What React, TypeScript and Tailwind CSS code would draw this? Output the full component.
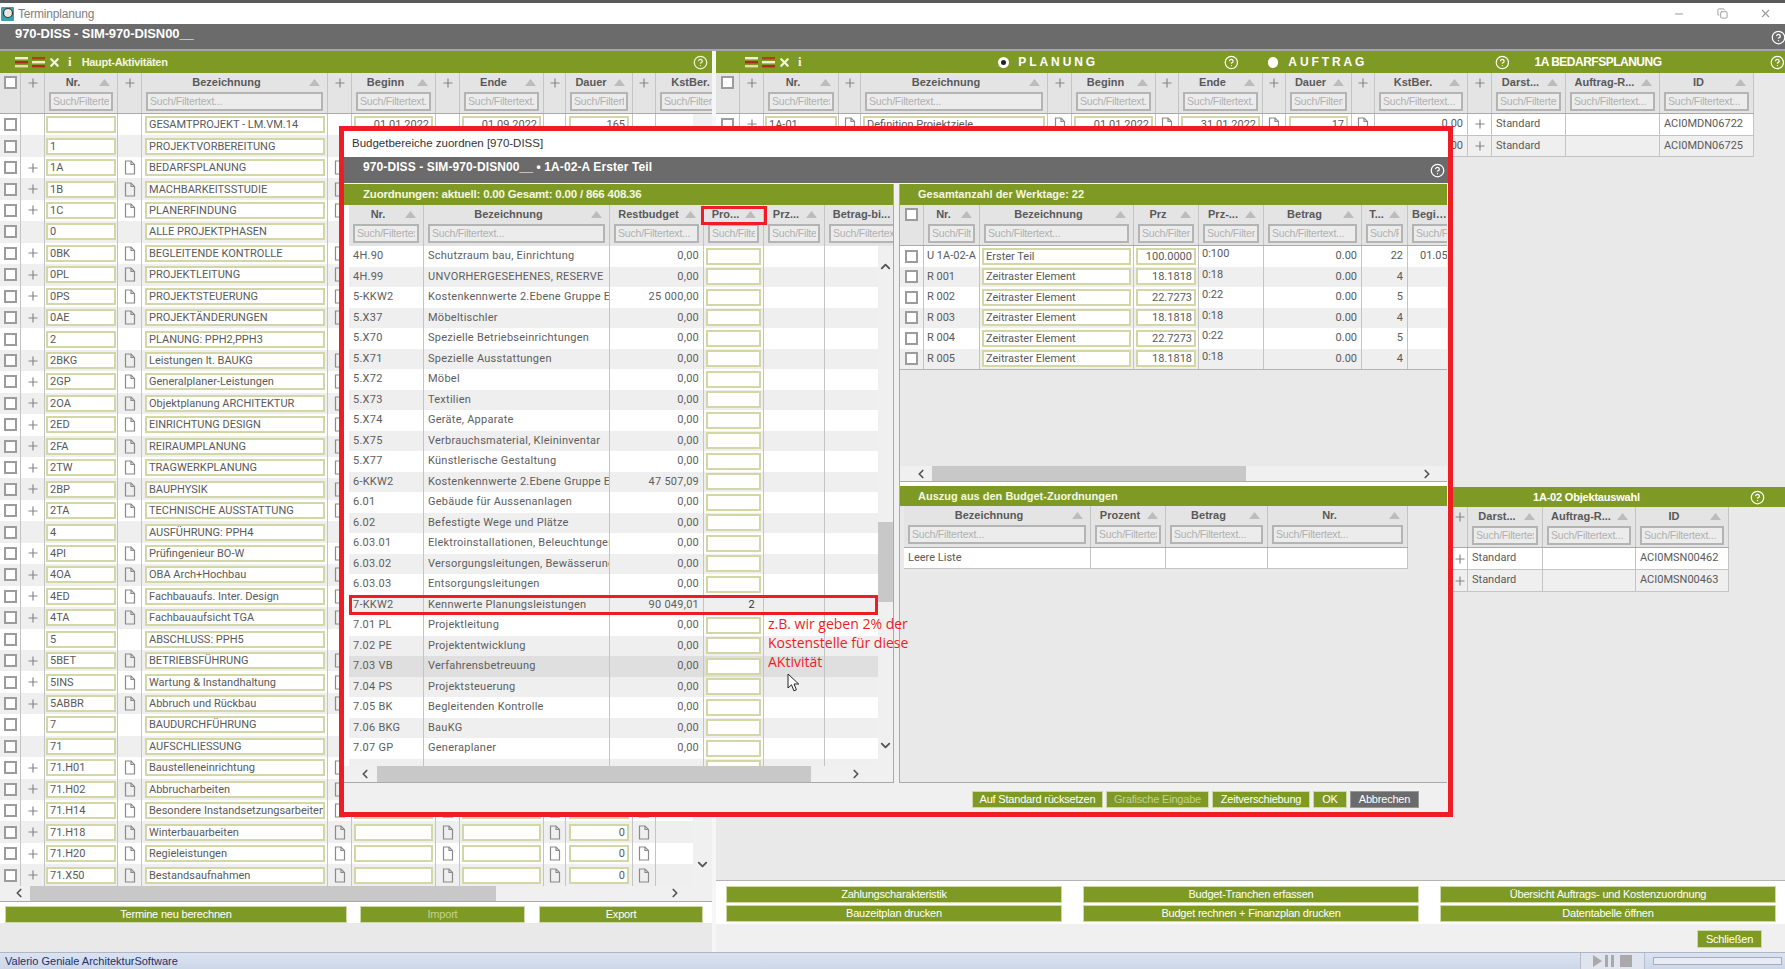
import { ChevronDown, ChevronLeft, ChevronRight, ChevronUp, CircleHelp, Copy, Minus, Plus, X } from "lucide-react";

const LEFT_COLS = "grid-cols-[21px_24px_73px_24px_186px_24px_84px_24px_84px_22px_67px_23px_86px]";
const RIGHT_COLS = "grid-cols-[24px_24px_75px_22px_187px_24px_84px_23px_84px_23px_66px_23px_93px_24px_74px_94px_94px]";
const OBJECT_COLS = "grid-cols-[16px_75px_93px_93px]";
const BUDGET_COLS = "grid-cols-[75px_186px_94px_60px_61px_90px]";
const DAYS_COLS = "grid-cols-[24px_56px_154px_65px_65px_98px_46px_60px]";
const EXTRACT_COLS = "grid-cols-[187px_75px_102px_140px]";

const activities: [string, string, boolean][] = [
    ["", "GESAMTPROJEKT - LM.VM.14", false],
    ["1", "PROJEKTVORBEREITUNG", false],
    ["1A", "BEDARFSPLANUNG", true],
    ["1B", "MACHBARKEITSSTUDIE", true],
    ["1C", "PLANERFINDUNG", true],
    ["0", "ALLE PROJEKTPHASEN", false],
    ["0BK", "BEGLEITENDE KONTROLLE", true],
    ["0PL", "PROJEKTLEITUNG", true],
    ["0PS", "PROJEKTSTEUERUNG", true],
    ["0AE", "PROJEKTÄNDERUNGEN", true],
    ["2", "PLANUNG: PPH2,PPH3", false],
    ["2BKG", "Leistungen lt. BAUKG", true],
    ["2GP", "Generalplaner-Leistungen", true],
    ["2OA", "Objektplanung ARCHITEKTUR", true],
    ["2ED", "EINRICHTUNG DESIGN", true],
    ["2FA", "REIRAUMPLANUNG", true],
    ["2TW", "TRAGWERKPLANUNG", true],
    ["2BP", "BAUPHYSIK", true],
    ["2TA", "TECHNISCHE AUSSTATTUNG", true],
    ["4", "AUSFÜHRUNG: PPH4", false],
    ["4PI", "Prüfingenieur BO-W", true],
    ["4OA", "OBA Arch+Hochbau", true],
    ["4ED", "Fachbauaufs. Inter. Design", true],
    ["4TA", "Fachbauaufsicht TGA", true],
    ["5", "ABSCHLUSS: PPH5", false],
    ["5BET", "BETRIEBSFÜHRUNG", true],
    ["5INS", "Wartung & Instandhaltung", true],
    ["5ABBR", "Abbruch und Rückbau", true],
    ["7", "BAUDURCHFÜHRUNG", false],
    ["71", "AUFSCHLIESSUNG", false],
    ["71.H01", "Baustelleneinrichtung", true],
    ["71.H02", "Abbrucharbeiten", true],
    ["71.H14", "Besondere Instandsetzungsarbeiten", true],
    ["71.H18", "Winterbauarbeiten", true],
    ["71.H20", "Regieleistungen", true],
    ["71.X50", "Bestandsaufnahmen", true],
];

const budgets: [string, string, string][] = [
    ["4H.90", "Schutzraum bau, Einrichtung", "0,00"],
    ["4H.99", "UNVORHERGESEHENES, RESERVE", "0,00"],
    ["5-KKW2", "Kostenkennwerte 2.Ebene Gruppe Einrichtung", "25 000,00"],
    ["5.X37", "Möbeltischler", "0,00"],
    ["5.X70", "Spezielle Betriebseinrichtungen", "0,00"],
    ["5.X71", "Spezielle Ausstattungen", "0,00"],
    ["5.X72", "Möbel", "0,00"],
    ["5.X73", "Textilien", "0,00"],
    ["5.X74", "Geräte, Apparate", "0,00"],
    ["5.X75", "Verbrauchsmaterial, Kleininventar", "0,00"],
    ["5.X77", "Künstlerische Gestaltung", "0,00"],
    ["6-KKW2", "Kostenkennwerte 2.Ebene Gruppe Einrichtung", "47 507,09"],
    ["6.01", "Gebäude für Aussenanlagen", "0,00"],
    ["6.02", "Befestigte Wege und Plätze", "0,00"],
    ["6.03.01", "Elektroinstallationen, Beleuchtungen", "0,00"],
    ["6.03.02", "Versorgungsleitungen, Bewässerung", "0,00"],
    ["6.03.03", "Entsorgungsleitungen", "0,00"],
    ["7-KKW2", "Kennwerte Planungsleistungen", "90 049,01"],
    ["7.01 PL", "Projektleitung", "0,00"],
    ["7.02 PE", "Projektentwicklung", "0,00"],
    ["7.03 VB", "Verfahrensbetreuung", "0,00"],
    ["7.04 PS", "Projektsteuerung", "0,00"],
    ["7.05 BK", "Begleitenden Kontrolle", "0,00"],
    ["7.06 BKG", "BauKG", "0,00"],
    ["7.07 GP", "Generaplaner", "0,00"],
    ["", "", ""],
];

const days: [string, string, string, string, string][] = [
    ["U 1A-02-A", "Erster Teil", "100.0000", "0:100", "22"],
    ["R 001", "Zeitraster Element", "18.1818", "0:18", "4"],
    ["R 002", "Zeitraster Element", "22.7273", "0:22", "5"],
    ["R 003", "Zeitraster Element", "18.1818", "0:18", "4"],
    ["R 004", "Zeitraster Element", "22.7273", "0:22", "5"],
    ["R 005", "Zeitraster Element", "18.1818", "0:18", "4"],
];

function DocIcon() {
    return (
        <svg width="12" height="15" viewBox="0 0 12 15" fill="none" stroke="#8a8a8a" strokeWidth="1.2">
            <path d="M1.5 1h5.5l3.5 3.5v9.5h-9z" />
            <path d="M7 1v3.5h3.5" />
        </svg>
    );
}

function PlusIcon() {
    return <Plus size={14} strokeWidth={2} className="text-[#858585]" />;
}

function Check() {
    return <div className="h-[13px] w-[13px] shrink-0 border-2 border-[#9c9c9c] bg-white" />;
}

function Sort() {
    return (
        <svg width="11" height="7" viewBox="0 0 11 7" className="shrink-0 fill-[#bcbcbc]">
            <path d="M5.5 0l5.5 7h-11z" />
        </svg>
    );
}

function Burger({ first }: { first: boolean }) {
    return (
        <svg width="13" height="11" viewBox="0 0 13 11">
            <rect y="0" width="13" height="2.4" fill={first ? "#f4edd2" : "#a8421c"} />
            <rect y="4" width="13" height="2.4" fill={first ? "#a8301a" : "#f4edd2"} />
            <rect y="8" width="13" height="2.4" fill={first ? "#e8d9a6" : "#a8301a"} />
        </svg>
    );
}

function BarIcons() {
    return (
        <div className="flex items-center">
            <Burger first />
            <div className="ml-[4px]">
                <Burger first={false} />
            </div>
            <X size={13} strokeWidth={4} className="ml-[3px] text-[#f3f3e6]" />
            <span className="ml-[7px] text-[13px] font-bold text-[#f3f3e6] [font-family:'Liberation_Serif',serif]">i</span>
        </div>
    );
}

function HeadBlank({ check }: { check?: boolean }) {
    return (
        <div className="flex h-full justify-center border-r border-[#c4c4c4] pt-[3px]">
            {check ? <Check /> : <PlusIcon />}
        </div>
    );
}

function Head({ label }: { label: string }) {
    return (
        <div className="flex h-full min-w-0 flex-col overflow-hidden border-r border-[#c4c4c4] px-[4px]">
            <div className="flex h-[18.5px] shrink-0 items-center">
                <span className="min-w-0 flex-1 truncate text-center text-[11px] font-bold text-[#595959]">{label}</span>
                <div className="ml-[2px] mr-[3px] flex">
                    <Sort />
                </div>
            </div>
            <input
                readOnly
                placeholder="Such/Filtertext..."
                className="h-[19px] w-full min-w-0 border-2 border-[#b4b4b4] bg-[#ececec] px-[2px] text-[10.5px] tracking-[-0.2px] outline-none placeholder:text-[#b0b0b0]"
            />
        </div>
    );
}

function Cell({ children, right, className = "" }: { children?: React.ReactNode; right?: boolean; className?: string }) {
    return (
        <div className={`flex h-full min-w-0 items-center overflow-hidden whitespace-nowrap border-r border-[#c4c4c4] ${right ? "justify-end" : ""} ${className}`}>
            {children}
        </div>
    );
}

function FieldBox({ value, right }: { value?: string; right?: boolean }) {
    return (
        <div className={`flex h-[17px] w-full min-w-0 items-center overflow-hidden whitespace-nowrap border-2 border-[#d3d7a6] bg-white px-[2px] leading-none ${right ? "justify-end" : ""}`}>
            {value}
        </div>
    );
}

function GreenButton({ children, dim, className = "" }: { children: React.ReactNode; dim?: boolean; className?: string }) {
    return (
        <button className={`flex h-[17px] items-center justify-center border border-[#cfd8a8] bg-[#7f9a24] text-[11px] tracking-[-0.2px] ${dim ? "text-[#c5d092]" : "text-white"} ${className}`}>
            {children}
        </button>
    );
}

function HScroll({ className, thumb }: { className: string; thumb: string }) {
    return (
        <div className={`flex h-[16px] shrink-0 items-center bg-[#f0f0f0] ${className}`}>
            <ChevronLeft size={14} strokeWidth={3} className="shrink-0 text-[#555]" />
            <div className={`h-full ${thumb} bg-[#c8c8c8]`} />
            <div className="flex-1" />
            <ChevronRight size={14} strokeWidth={3} className="shrink-0 text-[#555]" />
        </div>
    );
}

function ActivitiesPanel() {
    return (
        <div className="flex w-[712px] shrink-0 flex-col">
            <div className="flex h-[22px] shrink-0 items-center bg-[#7f9a24] pl-[15px] pr-[4px]">
                <BarIcons />
                <span className="ml-[10px] flex-1 text-[11px] font-bold tracking-[-0.3px] text-[#f2f5e0]">Haupt-Aktivitäten</span>
                <CircleHelp size={15} className="text-[#eef2d8]" />
            </div>
            <div className={`grid h-[41px] shrink-0 overflow-hidden border-b border-[#a9a9a9] bg-[#e4e4e4] ${LEFT_COLS}`}>
                <HeadBlank check />
                <HeadBlank />
                <Head label="Nr." />
                <HeadBlank />
                <Head label="Bezeichnung" />
                <HeadBlank />
                <Head label="Beginn" />
                <HeadBlank />
                <Head label="Ende" />
                <HeadBlank />
                <Head label="Dauer" />
                <HeadBlank />
                <Head label="KstBer." />
            </div>
            <div className="flex shrink-0">
                <div className="w-[693px] overflow-hidden">
                    {activities.map(([nr, name, open], i) => (
                        <div key={i} className={`grid h-[21.45px] text-[11px] text-[#5a5a5a] [font-family:Roboto,sans-serif] ${LEFT_COLS} ${i % 2 ? "bg-[#efefef]" : "bg-white"}`}>
                            <Cell className="justify-center"><Check /></Cell>
                            <Cell className="justify-center">{open && <PlusIcon />}</Cell>
                            <Cell className="px-[1px]"><FieldBox value={nr} /></Cell>
                            <Cell className="justify-center">{open && <DocIcon />}</Cell>
                            <Cell className="pl-[3px] pr-[2px]"><FieldBox value={name} /></Cell>
                            <Cell className="justify-center">{open && <DocIcon />}</Cell>
                            <Cell className="px-[2px]"><FieldBox right value={i === 0 ? "01.01.2022" : ""} /></Cell>
                            <Cell className="justify-center">{open && <DocIcon />}</Cell>
                            <Cell className="px-[2px]"><FieldBox right value={i === 0 ? "01.09.2022" : ""} /></Cell>
                            <Cell className="justify-center">{open && <DocIcon />}</Cell>
                            <Cell className="px-[3px]"><FieldBox right value={i === 0 ? "165" : i > 29 ? "0" : ""} /></Cell>
                            <Cell className="justify-center">{open && <DocIcon />}</Cell>
                            <Cell />
                        </div>
                    ))}
                </div>
                <div className="flex flex-1 flex-col items-center justify-end bg-[#f0f0f0] pb-[14px]">
                    <ChevronDown size={15} strokeWidth={3} className="text-[#555]" />
                </div>
            </div>
            <HScroll className="border-b border-[#a9a9a9] pl-[12px] pr-[30px]" thumb="ml-[4px] w-[466px]" />
            <div className="flex h-[21px] shrink-0 items-end bg-white pl-[5px]">
                <GreenButton className="w-[342px]">Termine neu berechnen</GreenButton>
                <GreenButton dim className="ml-[13px] w-[165px]">Import</GreenButton>
                <GreenButton className="ml-[14px] w-[164px]">Export</GreenButton>
            </div>
        </div>
    );
}

function PlanningPanel() {
    return (
        <div className="flex min-w-0 flex-1 flex-col">
            <div className="flex h-[22px] shrink-0 items-center bg-[#7f9a24] text-white">
                <div className="ml-[29px] w-[259px]">
                    <BarIcons />
                </div>
                <div className="h-[11px] w-[11px] rounded-full border-[3px] border-white bg-[#222]" />
                <span className="ml-[9px] w-[210px] text-[12px] font-bold tracking-[2.9px]">PLANUNG</span>
                <CircleHelp size={15} />
                <div className="ml-[29px] h-[11px] w-[11px] rounded-full bg-white" />
                <span className="ml-[10px] w-[211px] text-[12px] font-bold tracking-[2.9px]">AUFTRAG</span>
                <CircleHelp size={15} />
                <span className="ml-[25px] w-[241px] text-[12px] font-bold tracking-[-0.5px]">1A BEDARFSPLANUNG</span>
                <CircleHelp size={15} />
            </div>
            <div className="h-[414px] shrink-0">
                <div className={`grid h-[41px] w-[1038px] overflow-hidden border-b border-[#a9a9a9] bg-[#e4e4e4] ${RIGHT_COLS}`}>
                    <HeadBlank check />
                    <HeadBlank />
                    <Head label="Nr." />
                    <HeadBlank />
                    <Head label="Bezeichnung" />
                    <HeadBlank />
                    <Head label="Beginn" />
                    <HeadBlank />
                    <Head label="Ende" />
                    <HeadBlank />
                    <Head label="Dauer" />
                    <HeadBlank />
                    <Head label="KstBer." />
                    <HeadBlank />
                    <Head label="Darst..." />
                    <Head label="Auftrag-R..." />
                    <Head label="ID" />
                </div>
                {[
                    ["1A-01", "Definition Projektziele", "01.01.2022", "31.01.2022", "17", "ACI0MDN06722"],
                    ["1A-02", "Objektauswahl", "01.02.2022", "28.02.2022", "22", "ACI0MDN06725"],
                ].map((row, i) => (
                    <div key={row[0]} className={`grid h-[21.5px] w-[1038px] border-b border-[#c4c4c4] text-[11px] text-[#5a5a5a] [font-family:Roboto,sans-serif] ${RIGHT_COLS} ${i ? "bg-[#efefef]" : "bg-white"}`}>
                        <Cell className="justify-center"><Check /></Cell>
                        <Cell className="justify-center"><PlusIcon /></Cell>
                        <Cell className="px-[1px]"><FieldBox value={row[0]} /></Cell>
                        <Cell className="justify-center"><DocIcon /></Cell>
                        <Cell className="px-[2px]"><FieldBox value={row[1]} /></Cell>
                        <Cell className="justify-center"><DocIcon /></Cell>
                        <Cell className="px-[2px]"><FieldBox right value={row[2]} /></Cell>
                        <Cell className="justify-center"><DocIcon /></Cell>
                        <Cell className="px-[2px]"><FieldBox right value={row[3]} /></Cell>
                        <Cell className="justify-center"><DocIcon /></Cell>
                        <Cell className="px-[3px]"><FieldBox right value={row[4]} /></Cell>
                        <Cell className="justify-center"><DocIcon /></Cell>
                        <Cell right className="pr-[4px]">0.00</Cell>
                        <Cell className="justify-center"><PlusIcon /></Cell>
                        <Cell className="pl-[4px]">Standard</Cell>
                        <Cell />
                        <Cell className="pl-[4px]">{row[5]}</Cell>
                    </div>
                ))}
            </div>
            <div className="flex h-[20px] shrink-0 items-center bg-[#7f9a24] text-white">
                <span className="ml-[817px] w-[217px] text-[11px] font-bold tracking-[-0.2px]">1A-02 Objektauswahl</span>
                <CircleHelp size={15} />
            </div>
            <div className="ml-[736px] flex-1">
                <div className={`grid h-[41px] w-[277px] overflow-hidden border-b border-[#a9a9a9] bg-[#e4e4e4] ${OBJECT_COLS}`}>
                    <HeadBlank />
                    <Head label="Darst..." />
                    <Head label="Auftrag-R..." />
                    <Head label="ID" />
                </div>
                {["ACI0MSN00462", "ACI0MSN00463"].map((id, i) => (
                    <div key={id} className={`grid h-[22px] w-[277px] border-b border-[#c4c4c4] text-[11px] text-[#5a5a5a] [font-family:Roboto,sans-serif] ${OBJECT_COLS} ${i ? "bg-[#efefef]" : "bg-white"}`}>
                        <Cell className="justify-center"><PlusIcon /></Cell>
                        <Cell className="pl-[4px]">Standard</Cell>
                        <Cell />
                        <Cell className="pl-[4px]">{id}</Cell>
                    </div>
                ))}
            </div>
            <div className="flex h-[44px] shrink-0 gap-[21px] border-t border-[#b4b4b4] bg-white pl-[10px] pt-[5px]">
                {[
                    ["Zahlungscharakteristik", "Bauzeitplan drucken"],
                    ["Budget-Tranchen erfassen", "Budget rechnen + Finanzplan drucken"],
                    ["Übersicht Auftrags- und Kostenzuordnung", "Datentabelle öffnen"],
                ].map(([top, bottom]) => (
                    <div key={top} className="flex w-[336px] flex-col gap-[2px]">
                        <GreenButton className="w-full">{top}</GreenButton>
                        <GreenButton className="w-full">{bottom}</GreenButton>
                    </div>
                ))}
            </div>
            <div className="flex h-[28px] shrink-0 items-start justify-end bg-[#f0f0f0] pr-[23px] pt-[6px]">
                <GreenButton className="h-[18px] w-[65px]">Schließen</GreenButton>
            </div>
        </div>
    );
}

function BudgetTable() {
    return (
        <div className="flex w-[550px] shrink-0 flex-col border-r border-b border-[#a9a9a9] bg-white">
            <div className="flex h-[21px] shrink-0 items-center bg-[#7f9a24] pl-[19px] text-[11.5px] font-bold tracking-[-0.2px] text-[#f4f7e2]">
                Zuordnungen: aktuell: 0.00 Gesamt: 0.00 / 866 408.36
            </div>
            <div className="overflow-hidden pl-[5px]">
                <div className={`grid h-[42px] w-[566px] border-b border-[#a9a9a9] bg-[#e4e4e4] ${BUDGET_COLS}`}>
                    <Head label="Nr." />
                    <Head label="Bezeichnung" />
                    <Head label="Restbudget" />
                    <div className="relative h-full min-w-0">
                        <Head label="Pro..." />
                        <div className="absolute -left-[3px] -right-[3px] top-[1px] h-[19px] border-[3px] border-[#ee1c25]" />
                    </div>
                    <Head label="Prz..." />
                    <Head label="Betrag-bi..." />
                </div>
            </div>
            <div className="flex h-[520px] shrink-0 overflow-hidden">
                <div className="w-[534px] shrink-0 overflow-hidden pl-[5px]">
                    {budgets.map(([nr, name, rest], i) => (
                        <div
                            key={i}
                            className={`relative grid h-[20.5px] w-[529px] text-[11px] tracking-[0.25px] text-[#5e5e5e] [font-family:Roboto,sans-serif] ${BUDGET_COLS} ${nr === "7.03 VB" ? "bg-[#dfdfdf]" : i % 2 ? "bg-[#efefef]" : "bg-white"}`}
                        >
                            <Cell className="pl-[4px]">{nr}</Cell>
                            <Cell className="pl-[4px]">{name}</Cell>
                            <Cell right className="pr-[4px]">{rest}</Cell>
                            <Cell className="px-[2px]">
                                {nr === "7-KKW2" ? <div className="w-full pr-[6px] text-right text-[#333]">2</div> : <FieldBox />}
                            </Cell>
                            <Cell />
                            <Cell />
                            {nr === "7-KKW2" && <div className="absolute inset-x-0 inset-y-0 border-[3px] border-[#ee1c25]" />}
                        </div>
                    ))}
                </div>
                <div className="flex flex-1 flex-col items-center bg-[#f0f0f0]">
                    <ChevronUp size={15} strokeWidth={3} className="mt-[13px] shrink-0 text-[#555]" />
                    <div className="mt-[248px] h-[80px] w-full shrink-0 bg-[#c8c8c8]" />
                    <ChevronDown size={15} strokeWidth={3} className="mt-[136px] shrink-0 text-[#555]" />
                </div>
            </div>
            <HScroll className="pl-[14px] pr-[30px]" thumb="ml-[5px] w-[434px]" />
        </div>
    );
}

function DaysTable() {
    return (
        <div className="ml-[5px] flex w-[548px] shrink-0 flex-col border-b border-l border-[#a9a9a9] bg-[#e9e9e9]">
            <div className="flex h-[21px] shrink-0 items-center bg-[#7f9a24] pl-[18px] text-[11px] font-bold text-[#f4f7e2]">
                Gesamtanzahl der Werktage: 22
            </div>
            <div className="h-[261px] shrink-0 overflow-hidden">
                <div className={`grid h-[41px] w-[568px] border-b border-[#a9a9a9] bg-[#e4e4e4] ${DAYS_COLS}`}>
                    <HeadBlank check />
                    <Head label="Nr." />
                    <Head label="Bezeichnung" />
                    <Head label="Prz" />
                    <Head label="Prz-..." />
                    <Head label="Betrag" />
                    <Head label="T..." />
                    <Head label="Beginn" />
                </div>
                {days.map(([nr, name, prz, ratio, count], i) => (
                    <div key={nr} className={`grid h-[20.5px] w-[568px] text-[11px] text-[#5a5a5a] [font-family:Roboto,sans-serif] ${DAYS_COLS} ${i % 2 ? "bg-[#efefef]" : "bg-white"}`}>
                        <Cell className="justify-center"><Check /></Cell>
                        <Cell className="pl-[3px]">{nr}</Cell>
                        <Cell className="px-[2px]"><FieldBox value={name} /></Cell>
                        <Cell className="px-[2px]"><FieldBox right value={prz} /></Cell>
                        <Cell className="items-start pl-[3px]">{ratio}</Cell>
                        <Cell right className="pr-[4px]">0.00</Cell>
                        <Cell right className="pr-[4px]">{count}</Cell>
                        <Cell className="pl-[12px]">{i === 0 ? "01.05.2022" : ""}</Cell>
                    </div>
                ))}
                <div className="w-[568px] border-t border-[#b4b4b4]" />
            </div>
            <HScroll className="border-b border-[#a9a9a9] pl-[14px] pr-[13px]" thumb="ml-[4px] w-[314px]" />
            <div className="h-[4px] shrink-0 bg-white" />
            <div className="flex h-[20px] shrink-0 items-center bg-[#7f9a24] pl-[18px] text-[11px] font-bold text-[#f4f7e2]">
                Auszug aus den Budget-Zuordnungen
            </div>
            <div className="pl-[4px]">
                <div className={`grid h-[42px] w-[504px] border-b border-[#a9a9a9] bg-[#e4e4e4] ${EXTRACT_COLS}`}>
                    <Head label="Bezeichnung" />
                    <Head label="Prozent" />
                    <Head label="Betrag" />
                    <Head label="Nr." />
                </div>
                <div className={`grid h-[21px] w-[504px] border-b border-[#c4c4c4] bg-white text-[11px] text-[#5a5a5a] [font-family:Roboto,sans-serif] ${EXTRACT_COLS}`}>
                    <Cell className="pl-[4px]">Leere Liste</Cell>
                    <Cell />
                    <Cell />
                    <Cell />
                </div>
            </div>
        </div>
    );
}

function BudgetDialog() {
    return (
        <div className="absolute left-[339px] top-[126px] z-10 flex h-[691px] w-[1114px] flex-col border-[5px] border-[#ee1c25] bg-[#f0f0f0]">
            <div className="flex h-[26px] shrink-0 items-center bg-white pl-[8px] text-[11.5px] text-[#333]">
                Budgetbereiche zuordnen [970-DISS]
            </div>
            <div className="flex h-[27px] shrink-0 justify-between border-b border-[#f4f4f4] bg-[#6b6b6b] pl-[19px] pr-[3px] pt-[1px] text-white">
                <span className="text-[12px] font-bold tracking-[0.1px]">970-DISS - SIM-970-DISN00__ • 1A-02-A Erster Teil</span>
                <CircleHelp size={15} className="mt-[5px]" />
            </div>
            <div className="flex h-[599px] shrink-0">
                <BudgetTable />
                <DaysTable />
            </div>
            <div className="flex flex-1 items-start justify-end gap-[3px] pr-[29px] pt-[8px]">
                <GreenButton className="w-[131px]">Auf Standard rücksetzen</GreenButton>
                <GreenButton dim className="w-[103px]">Grafische Eingabe</GreenButton>
                <GreenButton className="w-[98px]">Zeitverschiebung</GreenButton>
                <GreenButton className="w-[34px]">OK</GreenButton>
                <button className="flex h-[17px] w-[69px] items-center justify-center border border-[#999] bg-[#6b6b6b] text-[11px] tracking-[-0.2px] text-white">Abbrechen</button>
            </div>
            <div className="absolute left-[424px] top-[484px] text-[14px] leading-[18.8px] text-[#ee1c25] [font-family:'Open_Sans',sans-serif]">
                z.B. wir geben 2% der
                <br />
                Kostenstelle für diese
                <br />
                AKtivität
            </div>
            <svg className="absolute left-[443px] top-[542px]" width="13" height="19" viewBox="0 0 13 19" fill="#fff" stroke="#222" strokeWidth="1">
                <path d="M1 1v14l3.5-3.2 2.4 6 2.5-1-2.4-5.8h4.7z" />
            </svg>
        </div>
    );
}

function App() {
    return (
        <div className="relative flex h-[969px] w-[1785px] flex-col overflow-hidden bg-[#e9e9e9] [font-family:'Liberation_Sans',sans-serif]">
            <div className="h-[3px] shrink-0 bg-[#5a5a5a]" />
            <div className="flex h-[21px] shrink-0 items-center bg-white">
                <svg width="14" height="16" viewBox="0 0 14 16" className="ml-[1px]">
                    <rect y="1" width="13" height="14" rx="1" fill="#3f9fb0" />
                    <circle cx="7" cy="7" r="4.5" fill="#e8e8e0" stroke="#333" strokeWidth="1.2" />
                </svg>
                <span className="ml-[3px] flex-1 text-[12px] tracking-[-0.2px] text-[#808080]">Terminplanung</span>
                <Minus size={12} className="mr-[32px] text-[#999]" />
                <Copy size={11} className="mr-[31px] text-[#999]" />
                <X size={13} className="mr-[13px] text-[#999]" />
            </div>
            <div className="flex h-[27px] shrink-0 items-start justify-between border-b-2 border-[#a5a5a5] bg-[#6b6b6b] pl-[15px] text-white">
                <span className="text-[13px] font-bold tracking-[-0.1px]">970-DISS - SIM-970-DISN00__</span>
                <CircleHelp size={15} className="mr-[-1px] mt-[6px]" />
            </div>
            <div className="flex min-h-0 flex-1">
                <div className="flex">
                    <ActivitiesPanel />
                </div>
                <div className="w-[4px] shrink-0 bg-[#f6f6f6]" />
                <PlanningPanel />
            </div>
            <div className="flex h-[17px] shrink-0 items-center border-t border-[#aeb6c6] bg-gradient-to-b from-[#dbe3f1] to-[#cdd7e8] pl-[5px] pr-[3px] text-[11px] text-[#22306e]">
                <span className="flex-1">Valerio Geniale ArchitekturSoftware</span>
                <div className="flex h-full w-[65px] items-center justify-center gap-[3px] border-x border-[#b5bccb] bg-[#dfe4ee]">
                    <svg width="9" height="12" viewBox="0 0 9 12"><path d="M0 0l9 6-9 6z" fill="#a9a9a9" /></svg>
                    <div className="h-[12px] w-[3px] bg-[#a9a9a9]" />
                    <div className="h-[12px] w-[3px] bg-[#a9a9a9]" />
                    <div className="ml-[3px] h-[12px] w-[12px] bg-[#a9a9a9]" />
                </div>
                <div className="ml-[8px] h-[8px] w-[129px] border border-[#a5adbd] bg-[#e7ebf3]" />
            </div>
            <BudgetDialog />
        </div>
    );
}

export default App;
